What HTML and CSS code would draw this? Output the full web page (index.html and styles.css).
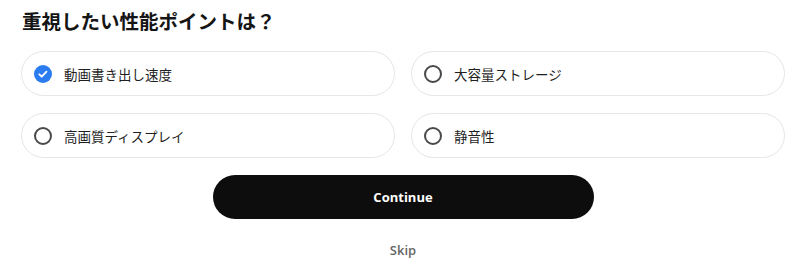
FILE: index.html
```html
<!DOCTYPE html>
<html lang="ja">
<head>
<meta charset="UTF-8">
<meta name="viewport" content="width=device-width, initial-scale=1.0">
<title>重視したい性能ポイント</title>
<link rel="stylesheet" href="styles.css">
</head>
<body>
<div class="pregunta">
    <h2 class="titulo">重視したい性能ポイントは？</h2>

    <div class="opciones">
        <label class="opcion activa">
            <span class="marca">
                <svg width="18" height="18" viewBox="0 0 18 18"><circle cx="9" cy="9" r="9" fill="#2b7cf0"/><path d="M5.3 9.3l2.4 2.4 4.8-5" fill="none" stroke="#fff" stroke-width="1.8" stroke-linecap="round" stroke-linejoin="round"/></svg>
            </span>
            動画書き出し速度
        </label>
        <label class="opcion">
            <span class="marca vacia"></span>
            大容量ストレージ
        </label>
        <label class="opcion">
            <span class="marca vacia"></span>
            高画質ディスプレイ
        </label>
        <label class="opcion">
            <span class="marca vacia"></span>
            静音性
        </label>
    </div>

    <div class="acciones">
        <button class="continuar">Continue</button>
        <a href="#" class="saltar">Skip</a>
    </div>
</div>
</body>
</html>
```

FILE: styles.css
```css
body {
    margin: 0;
    padding: 0;
    background: #fff;
    font-family: "Open Sans", "Noto Sans CJK JP", sans-serif;
}

.pregunta {
    padding: 7px 15px 0 21px;
}

.titulo {
    margin: 0 0 16px 1px;
    font-size: 19.5px;
    font-weight: 700;
    line-height: 28px;
    color: #151515;
    font-family: "Noto Sans CJK JP", sans-serif;
}

/* rejilla de opciones */
.opciones {
    display: grid;
    grid-template-columns: 1fr 1fr;
    column-gap: 16px;
    row-gap: 17px;
}

.opcion {
    display: flex;
    align-items: center;
    gap: 12px;
    height: 45px;
    box-sizing: border-box;
    padding: 0 0 0 12px;
    border: 1px solid #e6e6e6;
    border-radius: 23px;
    font-family: "Noto Sans CJK JP", sans-serif;
    font-size: 13.5px;
    color: #1f1f1f;
    cursor: pointer;
}

.marca {
    display: flex;
    width: 18px;
    height: 18px;
}

.marca.vacia {
    box-sizing: border-box;
    border: 2px solid #4a4a4a;
    border-radius: 50%;
}

/* botones */
.acciones {
    display: flex;
    flex-direction: column;
    align-items: center;
    margin-top: 17px;
}

.continuar {
    width: 381px;
    height: 44px;
    border: none;
    border-radius: 22px;
    background: #0d0d0d;
    color: #fff;
    font-family: "Open Sans", sans-serif;
    font-size: 13px;
    font-weight: 700;
    cursor: pointer;
}

.saltar {
    margin-top: 22px;
    font-size: 13px;
    font-weight: 600;
    color: #666;
    text-decoration: none;
}
```
